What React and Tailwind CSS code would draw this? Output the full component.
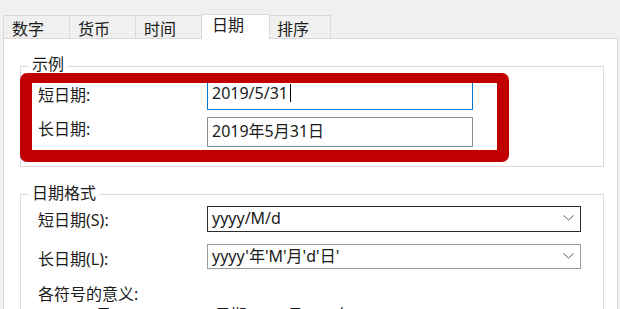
import React from "react";

const tabs = [
  { label: "数字", w: "w-[66px]", pl: "pl-[8px]" },
  { label: "货币", w: "w-[66px]", pl: "pl-[8px]" },
  { label: "时间", w: "w-[66px]", pl: "pl-[8px]" },
  { label: "日期", w: "w-[69px]", pl: "pl-[10px]", active: true },
  { label: "排序", w: "w-[61px]", pl: "pl-[7px]", last: true },
];

const Chevron = () => (
  <svg width="11" height="6" viewBox="0 0 11 6" fill="none">
    <path d="M0.5 0.5 L5.5 5 L10.5 0.5" stroke="#5a5a5a" strokeWidth="1" />
  </svg>
);

const Tab = ({ tab }) => {
  if (tab.active) {
    return (
      <div
        className={`${tab.w} ${tab.pl} relative z-10 -mb-px h-[25px] border-x border-t border-[#d9d9d9] bg-white pt-[2px] leading-[16px]`}
      >
        {tab.label}
      </div>
    );
  }
  return (
    <div
      className={`${tab.w} ${tab.pl} h-[23px] border-t border-[#d9d9d9] bg-[#f0f0f0] pt-[5px] leading-[16px] ${
        tab.last ? "border-r" : "border-l"
      }`}
    >
      {tab.label}
    </div>
  );
};

export default function App() {
  return (
    <div
      className="flex h-[309px] w-[620px] flex-col overflow-hidden bg-[#f0f0f0] text-[16px] text-[#1b1b1b]"
      style={{ fontFamily: "'Noto Sans', 'Noto Sans CJK SC', sans-serif" }}
    >
      {/* tab strip */}
      <div className="flex h-[38px] shrink-0 items-end pl-[3px]">
        {tabs.map((t) => (
          <Tab key={t.label} tab={t} />
        ))}
      </div>

      {/* tab page */}
      <div className="ml-[3px] h-[400px] w-[615px] shrink-0 border border-[#d9d9d9] bg-white pt-[27px]">
        {/* 示例 */}
        <div className="relative ml-[16px] h-[101px] w-[584px] border border-[#dcdcdc]">
          <div className="-mt-[11px] ml-[8px] w-fit bg-white px-[3px] leading-[16px]">
            示例
          </div>

          <div className="mt-[8px] flex items-center">
            <div className="ml-[17px] w-[169px] pb-[1px] leading-[16px]">短日期:</div>
            <div className="flex h-[30px] w-[266px] items-center border border-[#0078d7] pb-[4px] pl-[4px] leading-[16px]">
              2019/5/31
              <span className="ml-[2px] h-[18px] w-px bg-black" />
            </div>
          </div>

          <div className="mt-[7px] flex items-center">
            <div className="ml-[17px] w-[169px] pb-[6px] leading-[16px]">长日期:</div>
            <div className="flex h-[30px] w-[266px] items-center border border-[#8c8c8c] pb-[3px] pl-[4px] leading-[16px]">
              2019年5月31日
            </div>
          </div>

          {/* red highlight drawn over the sample rows */}
          <div className="absolute -left-px top-[6px] h-[89px] w-[489px] rounded-[7px] border-[12px] border-t-[10px] border-[#c00000]" />
        </div>

        {/* 日期格式 */}
        <div className="ml-[16px] mt-[27px] h-[200px] w-[584px] border border-[#dcdcdc]">
          <div className="-mt-[10px] ml-[8px] w-fit bg-white px-[3px] leading-[16px]">
            日期格式
          </div>

          <div className="mt-[5px] flex items-center">
            <div className="ml-[17px] w-[169px] pt-[2px] leading-[16px]">短日期(S):</div>
            <div className="flex h-[26px] w-[374px] items-center justify-between border border-[#2b2b2b] pb-[2px] pl-[4px] pr-[6px] leading-[16px]">
              <span>yyyy/M/d</span>
              <Chevron />
            </div>
          </div>

          <div className="mt-[12px] flex items-center">
            <div className="ml-[17px] w-[169px] pt-[4px] leading-[16px]">长日期(L):</div>
            <div className="flex h-[25px] w-[374px] items-center justify-between border border-[#9a9a9a] pb-[2px] pl-[4px] pr-[6px] leading-[16px]">
              <span>yyyy'年'M'月'd'日'</span>
              <Chevron />
            </div>
          </div>

          <div className="ml-[17px] mt-[17px] leading-[16px]">各符号的意义:</div>
          <div className="ml-[19px] mt-[5px] leading-[16px]">
            d, dd = 日; ddd, dddd = 星期; M = 月; y = 年
          </div>
        </div>
      </div>
    </div>
  );
}
